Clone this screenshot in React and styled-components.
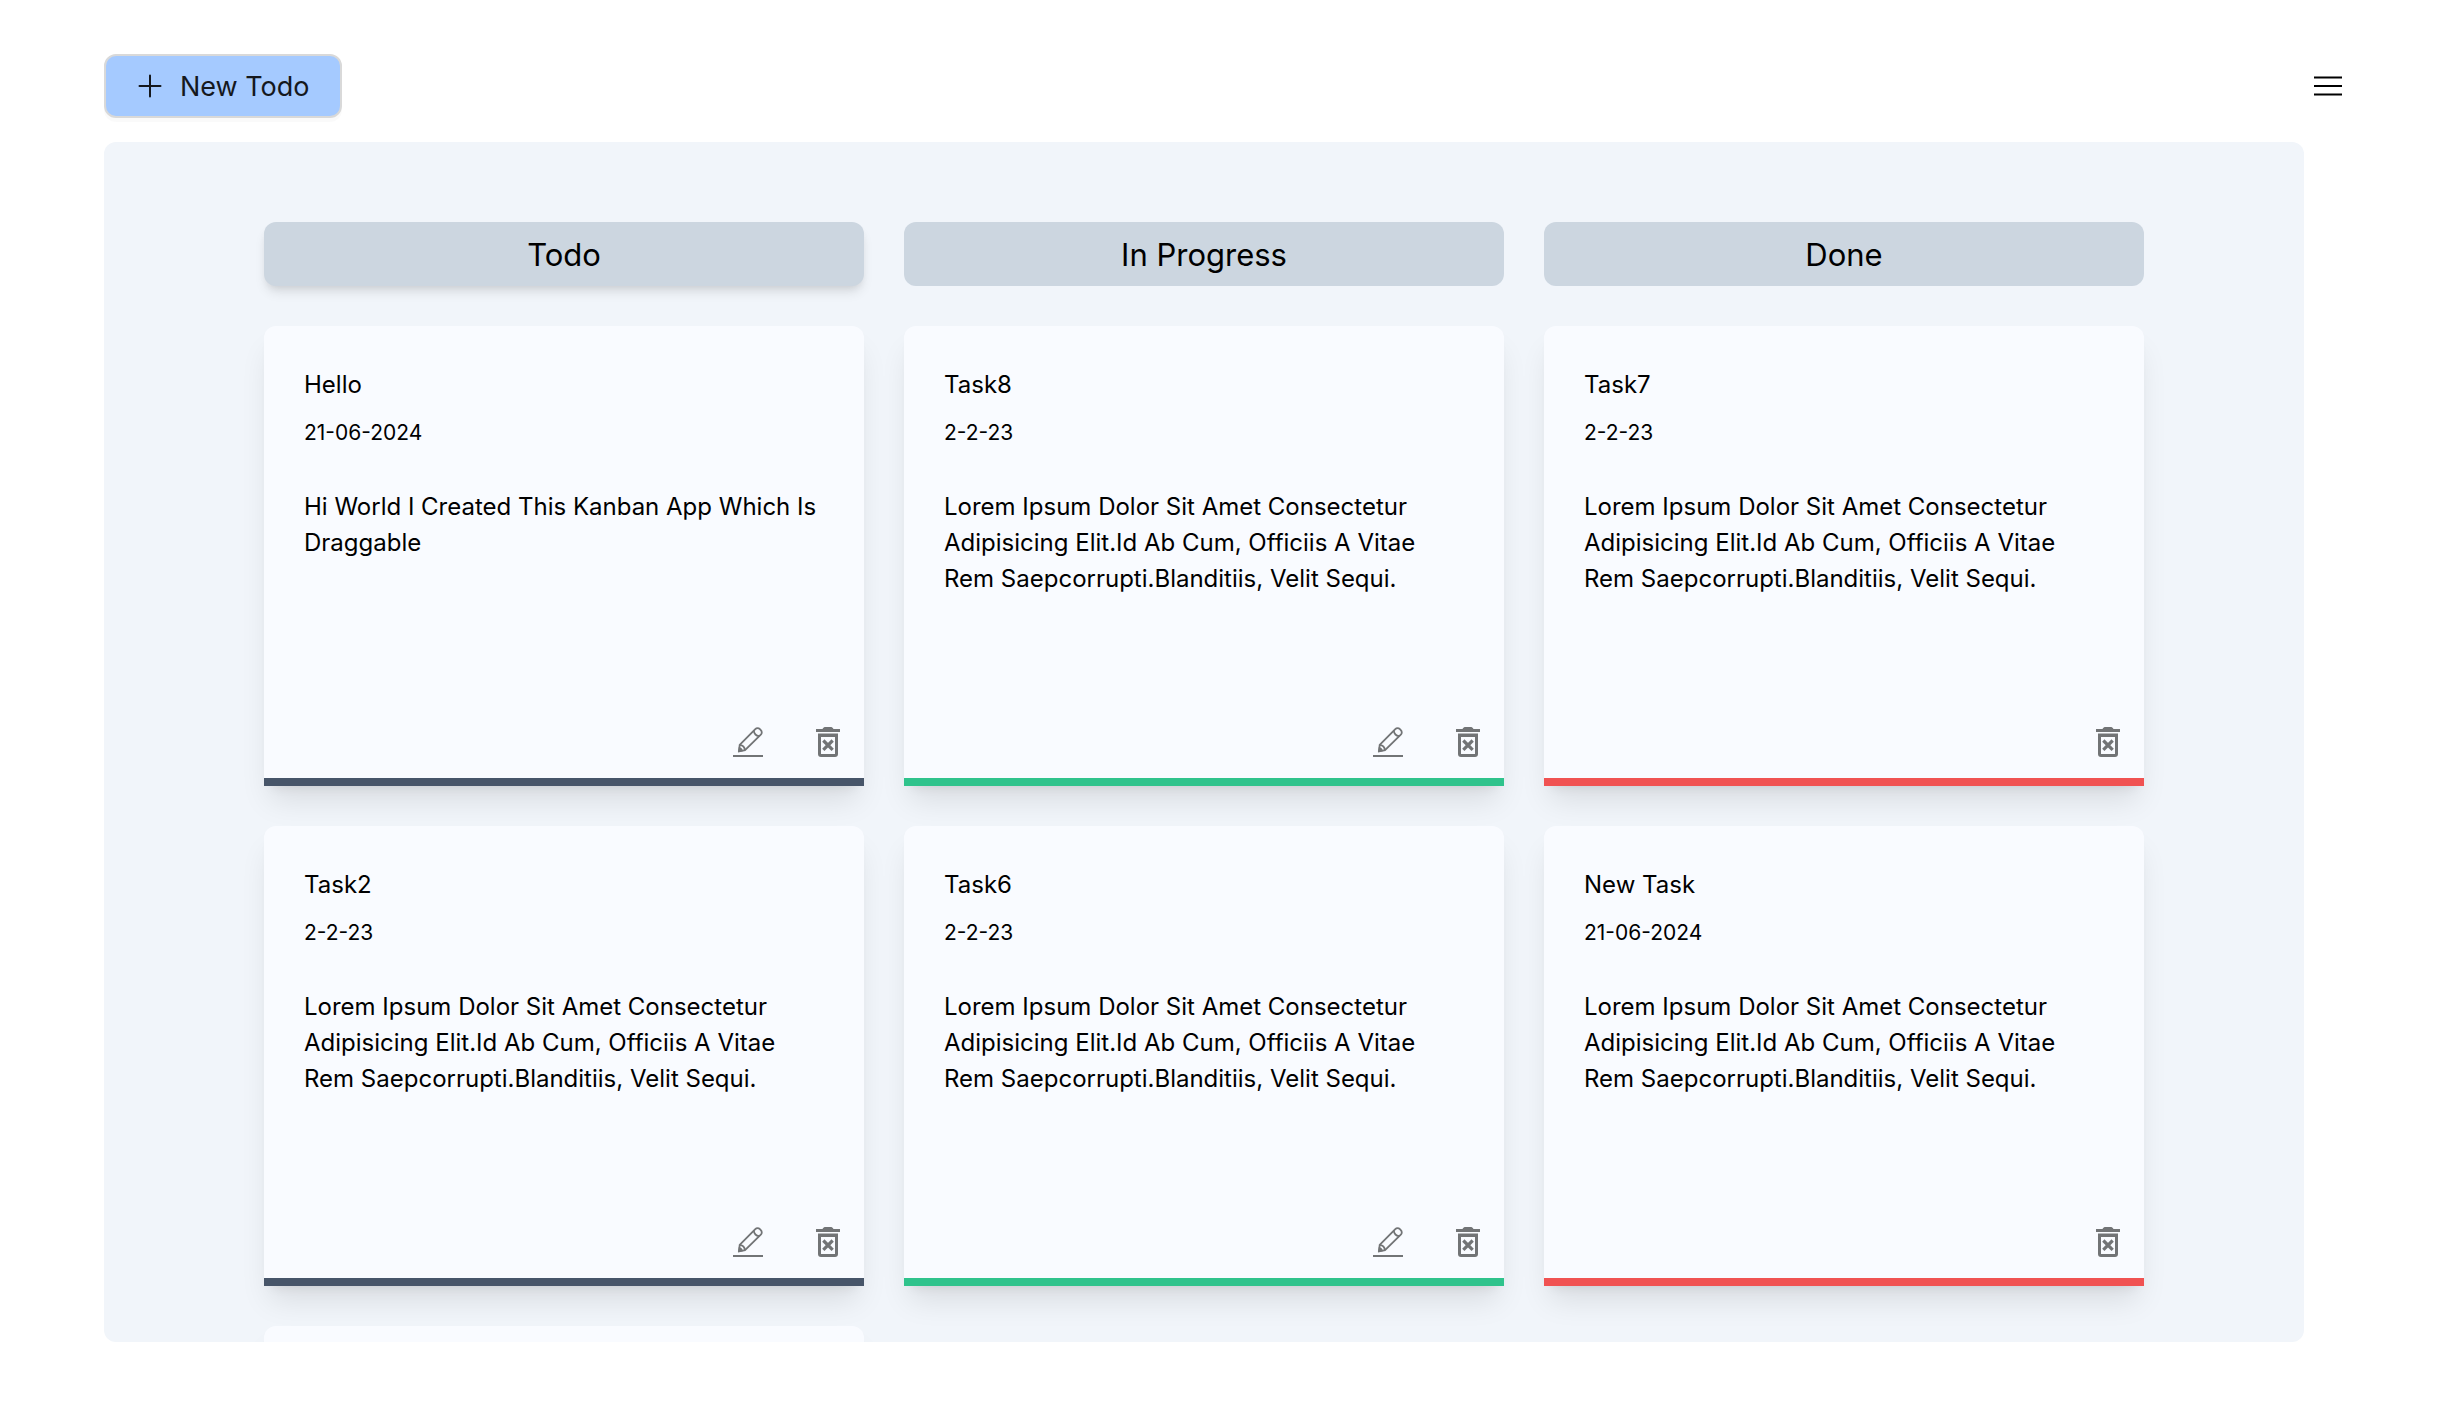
import React, { useState } from 'react';
import styled, { createGlobalStyle } from 'styled-components';

const GlobalStyle = createGlobalStyle`
  * { box-sizing: border-box; }
  body { margin: 0; background: #fff; color: #000; font-family: Inter, 'Liberation Sans', sans-serif; }
  h2, h3, p { margin: 0; font-weight: 400; }
  button { font: inherit; color: inherit; cursor: pointer; }
`;

const Page = styled.div`
  padding: 54px 100px 86px 104px;
`;

const TopBar = styled.header`
  display: flex;
  align-items: center;
  justify-content: space-between;
  margin-bottom: 24px;
`;

const NewButton = styled.button`
  display: flex;
  align-items: center;
  gap: 16px;
  height: 64px;
  padding: 0 30px;
  font-size: 27px;
  color: #15181d;
  background: #a5caff;
  border: 2px solid #d9d9d9;
  border-radius: 12px;
  box-shadow: 0 4px 0 rgba(0, 0, 0, 0.02);
`;

const MenuButton = styled.button`
  display: flex;
  padding: 0;
  border: 0;
  background: none;
`;

const Board = styled.main`
  height: 1200px;
  margin-right: 40px;
  padding: 80px 160px 0;
  overflow: hidden;
  background: #f1f5fa;
  border-radius: 12px;
`;

const Columns = styled.div`
  display: grid;
  grid-template-columns: repeat(3, 1fr);
  gap: 40px;
`;

const Column = styled.section`
  display: flex;
  flex-direction: column;
  gap: 40px;
`;

const ColumnTitle = styled.h2`
  padding-top: 2px;
  font-size: 31px;
  line-height: 62px;
  text-align: center;
  background: #ccd6e0;
  border-radius: 12px;
  box-shadow: ${(p) => (p.$raised ? '0 8px 12px -2px rgba(0,0,0,.1), 0 4px 8px -4px rgba(0,0,0,.1)' : 'none')};
`;

const Card = styled.article`
  display: flex;
  flex-direction: column;
  height: 460px;
  padding: 41px 24px 21px 40px;
  background: #f9fbff;
  border-bottom: 8px solid ${(p) => p.$accent};
  border-radius: 12px 12px 0 0;
  box-shadow: 0 20px 30px -6px rgba(0, 0, 0, 0.1), 0 8px 12px -8px rgba(0, 0, 0, 0.1);
`;

const CardTitle = styled.h3`
  font-size: 24px;
  line-height: 36px;
`;

const CardDate = styled.p`
  margin-top: 15px;
  font-size: 21px;
  line-height: 30px;
`;

const CardText = styled.p`
  margin-top: 41px;
  padding-right: 16px;
  font-size: 24px;
  line-height: 36px;
`;

const Actions = styled.div`
  display: flex;
  justify-content: flex-end;
  gap: 53px;
  margin-top: auto;
`;

const IconButton = styled.button`
  display: flex;
  padding: 0;
  color: #727476;
  border: 0;
  background: none;
`;

const PlusIcon = () => (
  <svg width="28" height="28" viewBox="0 0 28 28" fill="none" stroke="currentColor" strokeWidth="2" strokeLinecap="round" aria-hidden="true">
    <path d="M14 3.500v21M3.500 14h21" />
  </svg>
);

const MenuIcon = () => (
  <svg width="32" height="32" viewBox="0 0 32 32" fill="none" stroke="#000" strokeWidth="2" aria-hidden="true">
    <path d="M2 7.500h28M2 16h28M2 24.500h28" />
  </svg>
);

const PencilIcon = () => (
  <svg width="30" height="30" viewBox="0 0 30 30" fill="none" stroke="currentColor" strokeWidth="1.800" aria-hidden="true">
    <path d="M6.700 17.900 22.300 2.200a3.200 3.200 0 0 1 4.600 0l.9.9a3.200 3.200 0 0 1 0 4.600L12 23.200l-6 1.100z" />
    <path d="M20.800 3.900a6.200 6.200 0 0 0 5.300 5.300M7 17.900c2.600.4 4.500 2.400 5 5.100" />
    <path d="M0 29h30" strokeWidth="2" />
    <path d="m5.800 20-.9 5 5-.8a5 5 0 0 0-4.100-4.200z" fill="currentColor" stroke="none" />
  </svg>
);

const TrashIcon = () => (
  <svg width="24" height="30" viewBox="0 0 24 30" fill="none" aria-hidden="true">
    <path d="M0 2h6.500C7.300.5 8.200 0 9.500 0h5c1.300 0 2.200.5 3 2H24v3H0z" fill="currentColor" />
    <path
      fill="currentColor"
      fillRule="evenodd"
      d="M2 6.500h20V27a3 3 0 0 1-3 3H5a3 3 0 0 1-3-3zM5 10v17h14V10z"
    />
    <path d="m7.300 13.500 9.400 9.400M16.700 13.500l-9.400 9.400" stroke="currentColor" strokeWidth="3.200" />
  </svg>
);

const LOREM =
  'Lorem Ipsum Dolor Sit Amet Consectetur Adipisicing Elit.Id Ab Cum, Officiis A Vitae Rem Saepcorrupti.Blanditiis, Velit Sequi.';

const COLUMNS = [
  {
    name: 'Todo',
    accent: '#475569',
    raised: true,
    editable: true,
    tasks: [
      { title: 'Hello', date: '21-06-2024', text: 'Hi World I Created This Kanban App Which Is Draggable' },
      { title: 'Task2', date: '2-2-23', text: LOREM },
      { title: '', date: '', text: '' },
    ],
  },
  {
    name: 'In Progress',
    accent: '#2fc38c',
    editable: true,
    tasks: [
      { title: 'Task8', date: '2-2-23', text: LOREM },
      { title: 'Task6', date: '2-2-23', text: LOREM },
    ],
  },
  {
    name: 'Done',
    accent: '#f05252',
    tasks: [
      { title: 'Task7', date: '2-2-23', text: LOREM },
      { title: 'New Task', date: '21-06-2024', text: LOREM },
    ],
  },
];

export default function App() {
  const [columns] = useState(COLUMNS);
  return (
    <Page>
      <GlobalStyle />
      <TopBar>
        <NewButton type="button">
          <PlusIcon />
          New Todo
        </NewButton>
        <MenuButton type="button" aria-label="Menu">
          <MenuIcon />
        </MenuButton>
      </TopBar>
      <Board>
        <Columns>
          {columns.map((column) => (
            <Column key={column.name}>
              <ColumnTitle $raised={column.raised}>{column.name}</ColumnTitle>
              {column.tasks.map((task, i) => (
                <Card key={i} $accent={column.accent}>
                  <CardTitle>{task.title}</CardTitle>
                  <CardDate>{task.date}</CardDate>
                  <CardText>{task.text}</CardText>
                  <Actions>
                    {column.editable && (
                      <IconButton type="button" aria-label="Edit">
                        <PencilIcon />
                      </IconButton>
                    )}
                    <IconButton type="button" aria-label="Delete">
                      <TrashIcon />
                    </IconButton>
                  </Actions>
                </Card>
              ))}
            </Column>
          ))}
        </Columns>
      </Board>
    </Page>
  );
}
